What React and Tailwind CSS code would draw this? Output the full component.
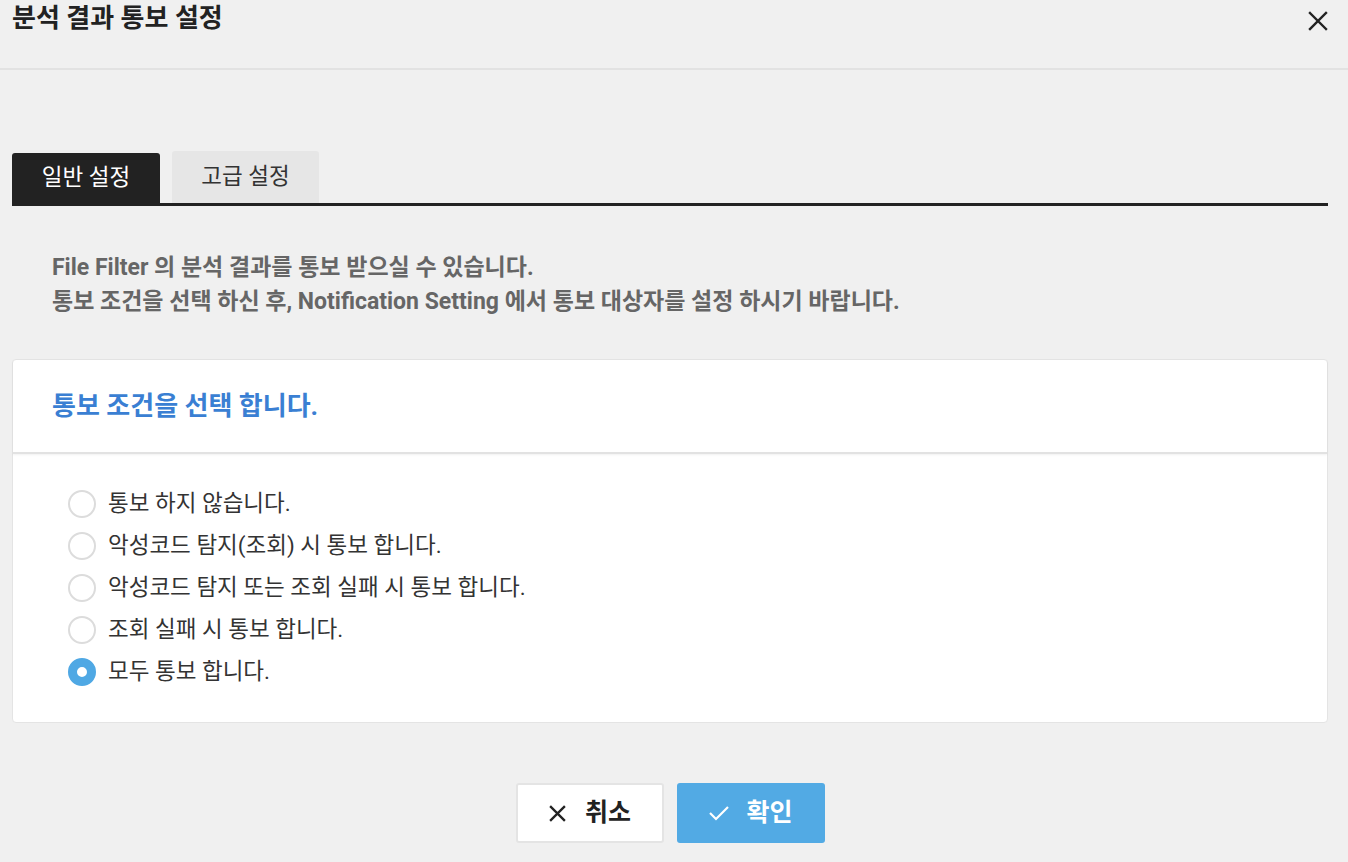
import React, { useState } from "react";

const options = [
  "통보 하지 않습니다.",
  "악성코드 탐지(조회) 시 통보 합니다.",
  "악성코드 탐지 또는 조회 실패 시 통보 합니다.",
  "조회 실패 시 통보 합니다.",
  "모두 통보 합니다.",
];

export default function App() {
  const [sel, setSel] = useState(4);
  return (
    <div
      className="w-[1348px] h-[862px] bg-[#f0f0f0] overflow-hidden"
      style={{ fontFamily: "Roboto, 'Noto Sans CJK KR', sans-serif" }}
    >
      <div className="h-[70px] border-b-2 border-[#e2e2e2] flex items-start justify-between pl-[12px] pr-[20px]">
        <h1 className="text-[26px] font-bold text-[#222] leading-[30px] mt-[3px]">분석 결과 통보 설정</h1>
        <button className="mt-[11px] text-[#222]">
          <svg width="20" height="20" viewBox="0 0 20 20" fill="none" stroke="currentColor" strokeWidth="2.4" strokeLinecap="square">
            <path d="M2 2 L18 18 M18 2 L2 18" />
          </svg>
        </button>
      </div>

      <div className="pl-[12px] pr-[20px] pt-[81px]">
        <div className="flex items-end gap-[12px] border-b-[3px] border-[#222]">
          <div className="w-[148px] h-[50px] bg-[#222] text-white text-[22.5px] rounded-t-[3px] flex items-center justify-center">
            일반 설정
          </div>
          <div className="w-[147px] h-[52px] bg-[#e6e6e6] text-[#333] text-[22.5px] rounded-t-[3px] flex items-center justify-center">
            고급 설정
          </div>
        </div>

        <div className="pl-[40px] pt-[45px] text-[23px] font-bold text-[#666] leading-[34px]">
          <p>File Filter 의 분석 결과를 통보 받으실 수 있습니다.</p>
          <p>통보 조건을 선택 하신 후, Notification Setting 에서 통보 대상자를 설정 하시기 바랍니다.</p>
        </div>

        <div className="mt-[40px] bg-white border border-[#e4e4e4] rounded-[4px]">
          <div className="h-[94px] border-b-2 border-[#e2e2e2] shadow-[0_1px_2px_rgba(0,0,0,0.06)] flex items-center pl-[39px]">
            <h2 className="text-[26px] font-bold text-[#3a7fd3]">통보 조건을 선택 합니다.</h2>
          </div>
          <div className="pt-[36px] pb-[36px] pl-[55px] flex flex-col gap-[14px]">
            {options.map((o, i) => (
              <label key={i} className="flex items-center h-[28px] cursor-pointer" onClick={() => setSel(i)}>
                {sel === i ? (
                  <span className="w-[28px] h-[28px] shrink-0 rounded-full border-[9px] border-[#4fa8e4] bg-white box-border" />
                ) : (
                  <span className="w-[28px] h-[28px] shrink-0 rounded-full border-2 border-[#dcdcdc] bg-white box-border" />
                )}
                <span className="ml-[12px] text-[22.5px] text-[#333] whitespace-nowrap">{o}</span>
              </label>
            ))}
          </div>
        </div>

        <div className="flex justify-center gap-[13px] mt-[60px]">
          <button className="w-[148px] h-[60px] bg-white border-2 border-[#e4e4e4] rounded-[3px] flex items-center justify-center gap-[18px] text-[25px] font-bold text-[#222]">
            <svg width="19" height="19" viewBox="0 0 18 18" fill="none" stroke="currentColor" strokeWidth="2.2">
              <path d="M2 2 L16 16 M16 2 L2 16" />
            </svg>
            취소
          </button>
          <button className="w-[148px] h-[60px] bg-[#52aae4] rounded-[3px] flex items-center justify-center gap-[16px] text-[25px] font-bold text-white">
            <svg width="22" height="16" viewBox="0 0 22 16" fill="none" stroke="currentColor" strokeWidth="2.2">
              <path d="M2 8 L8 14 L20 2" />
            </svg>
            확인
          </button>
        </div>
      </div>
    </div>
  );
}
